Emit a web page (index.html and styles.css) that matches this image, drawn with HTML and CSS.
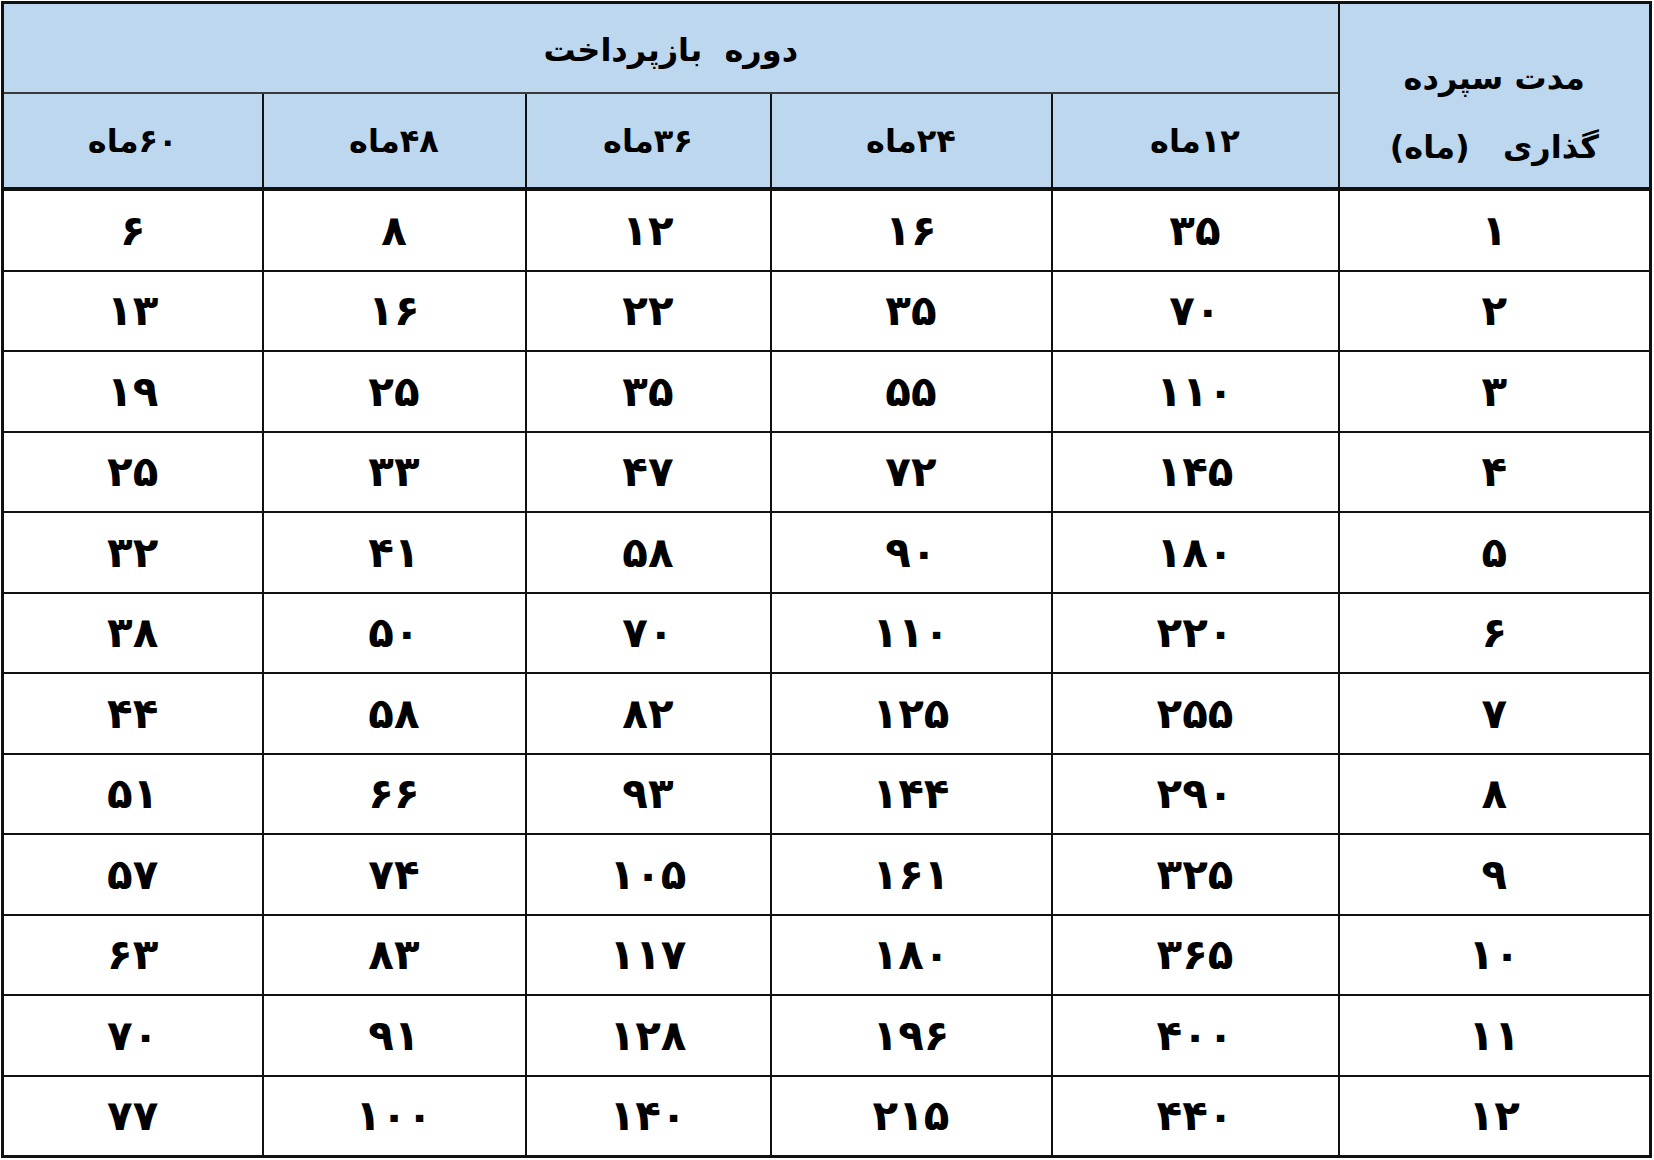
FILE: index.html
```html
<!DOCTYPE html>
<html lang="fa" dir="rtl">
<head>
<meta charset="utf-8">
<title>جدول دوره بازپرداخت</title>
<link rel="stylesheet" href="styles.css">
</head>
<body>
<table class="grid">
  <colgroup>
    <col class="c-term">
    <col class="c-12">
    <col class="c-24">
    <col class="c-36">
    <col class="c-48">
    <col class="c-60">
  </colgroup>
  <thead>
    <tr class="head-top">
      <th class="term-head" rowspan="2"><span class="line">مدت سپرده</span><span class="line">گذاری&nbsp;&nbsp; (ماه)</span></th>
      <th class="group-head" colspan="5">دوره&nbsp;&nbsp;بازپرداخت</th>
    </tr>
    <tr class="head-sub">
      <th>۱۲ماه</th>
      <th>۲۴ماه</th>
      <th>۳۶ماه</th>
      <th>۴۸ماه</th>
      <th>۶۰ماه</th>
    </tr>
  </thead>
  <tbody>
    <tr><td>۱</td><td>۳۵</td><td>۱۶</td><td>۱۲</td><td>۸</td><td>۶</td></tr>
    <tr><td>۲</td><td>۷۰</td><td>۳۵</td><td>۲۲</td><td>۱۶</td><td>۱۳</td></tr>
    <tr><td>۳</td><td>۱۱۰</td><td>۵۵</td><td>۳۵</td><td>۲۵</td><td>۱۹</td></tr>
    <tr><td>۴</td><td>۱۴۵</td><td>۷۲</td><td>۴۷</td><td>۳۳</td><td>۲۵</td></tr>
    <tr><td>۵</td><td>۱۸۰</td><td>۹۰</td><td>۵۸</td><td>۴۱</td><td>۳۲</td></tr>
    <tr><td>۶</td><td>۲۲۰</td><td>۱۱۰</td><td>۷۰</td><td>۵۰</td><td>۳۸</td></tr>
    <tr><td>۷</td><td>۲۵۵</td><td>۱۲۵</td><td>۸۲</td><td>۵۸</td><td>۴۴</td></tr>
    <tr><td>۸</td><td>۲۹۰</td><td>۱۴۴</td><td>۹۳</td><td>۶۶</td><td>۵۱</td></tr>
    <tr><td>۹</td><td>۳۲۵</td><td>۱۶۱</td><td>۱۰۵</td><td>۷۴</td><td>۵۷</td></tr>
    <tr><td>۱۰</td><td>۳۶۵</td><td>۱۸۰</td><td>۱۱۷</td><td>۸۳</td><td>۶۳</td></tr>
    <tr><td>۱۱</td><td>۴۰۰</td><td>۱۹۶</td><td>۱۲۸</td><td>۹۱</td><td>۷۰</td></tr>
    <tr><td>۱۲</td><td>۴۴۰</td><td>۲۱۵</td><td>۱۴۰</td><td>۱۰۰</td><td>۷۷</td></tr>
  </tbody>
</table>
</body>
</html>
```

FILE: styles.css
```css
html, body {
  margin: 0;
  padding: 0;
  background: #ffffff;
}

body {
  padding: 1px 2px 0 1px;
  font-family: "DejaVu Sans", "Noto Sans", sans-serif;
  color: #000;
}

.grid {
  width: 1651px;
  border-collapse: collapse;
  table-layout: fixed;
  border: 3px solid #111;
}

.c-term { width: 312px; }
.c-12 { width: 287px; }
.c-24 { width: 281px; }
.c-36 { width: 245px; }
.c-48 { width: 263px; }
.c-60 { width: 260px; }

.grid th,
.grid td {
  border: 2px solid #111;
  text-align: center;
  vertical-align: middle;
  padding: 0;
  font-weight: bold;
}

.grid thead th {
  background: #bdd7ee;
  font-size: 32px;
}

.head-top th {
  height: 84px;
}

.group-head {
  border-bottom: 2px solid #3a3a3a !important;
  padding-top: 4px !important;
}

.head-sub th {
  height: 93px;
  border-bottom: 4px solid #111;
  font-size: 31px;
  letter-spacing: -1px;
}

.term-head {
  vertical-align: top !important;
  padding-top: 40px !important;
  border-bottom: 4px solid #111 !important;
  border-right: 3px solid #111;
}

.term-head .line {
  display: block;
  line-height: 69px;
}

.grid tbody td {
  height: 78.5px;
  font-size: 42px;
  letter-spacing: -3px;
}
```
